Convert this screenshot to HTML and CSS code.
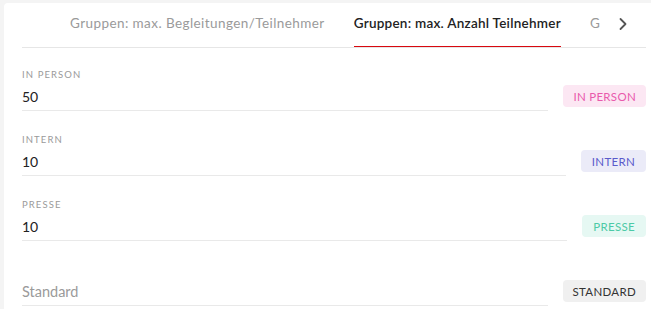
FILE: index.html
```html
<!DOCTYPE html>
<html lang="de">
<head>
<meta charset="utf-8">
<title>Gruppen</title>
<link rel="stylesheet" href="styles.css">
</head>
<body>
<div class="frame">
  <div class="card">
    <div class="tabs">
      <div class="tab-spacer"></div>
      <div class="tab-list">
        <div class="tab">Gruppen: max. Begleitungen/Teilnehmer</div>
        <div class="tab active">Gruppen: max. Anzahl Teilnehmer</div>
        <div class="tab">G</div>
      </div>
      <div class="tab-arrow">
        <svg width="10" height="14" viewBox="0 0 10 14"><path d="M2.5 2 L7.5 7 L2.5 12" fill="none" stroke="#555" stroke-width="1.8" stroke-linecap="round" stroke-linejoin="round"/></svg>
      </div>
    </div>
    <div class="rows">
      <div class="row">
        <div class="field">
          <div class="label">IN PERSON</div>
          <div class="value">50</div>
        </div>
        <span class="badge pink">IN PERSON</span>
      </div>
      <div class="row">
        <div class="field">
          <div class="label">INTERN</div>
          <div class="value">10</div>
        </div>
        <span class="badge purple">INTERN</span>
      </div>
      <div class="row">
        <div class="field">
          <div class="label">PRESSE</div>
          <div class="value">10</div>
        </div>
        <span class="badge green">PRESSE</span>
      </div>
      <div class="row">
        <div class="field">
          <div class="value placeholder">Standard</div>
        </div>
        <span class="badge gray">STANDARD</span>
      </div>
    </div>
  </div>
</div>
</body>
</html>
```
FILE: styles.css
```css
* { box-sizing: border-box; }
html, body { margin: 0; padding: 0; background: #fff; }
body { font-family: Lato, "Open Sans", sans-serif; color: #222; }
.frame {
  background: #f4f4f4;
  padding: 3px 0 0 4px;
  height: 309px;
}
.card {
  background: #fff;
  height: 306px;
  padding: 0 5px 0 18px;
  border-top-left-radius: 4px;
}
.tabs {
  display: flex;
  align-items: stretch;
  height: 45px;
  border-bottom: 1px solid #e6e6e6;
}
.tab-spacer { width: 48px; flex: none; }
.tab-list {
  display: flex;
  flex: 1;
  overflow: hidden;
  gap: 29px;
}
.tab {
  flex: none;
  font-size: 13.5px;
  letter-spacing: 0.42px;
  color: #9a9a9a;
  display: flex;
  align-items: center;
  padding-bottom: 4px;
  border-bottom: 2px solid transparent;
  margin-bottom: -1px;
  white-space: nowrap;
}
.tab.active {
  color: #222;
  font-weight: 600;
  letter-spacing: 0.25px;
  border-bottom-color: #d8090f;
}
.tab-arrow {
  width: 46px;
  flex: none;
  display: flex;
  align-items: center;
  justify-content: center;
  padding-bottom: 2px;
  background: #fff;
}
.rows {
  padding-top: 20px;
  display: flex;
  flex-direction: column;
  gap: 22px;
}
.row {
  display: flex;
  align-items: flex-end;
  gap: 15px;
}
.field {
  flex: 1;
  height: 43px;
  border-bottom: 1px solid #e9e9e9;
  display: flex;
  flex-direction: column;
  justify-content: flex-end;
  padding-bottom: 5px;
}
.label {
  font-size: 9.5px;
  letter-spacing: 1.1px;
  color: #9a9a9a;
  margin-bottom: 8px;
}
.value { font-size: 14px; color: #222; line-height: 17px; }
.value.placeholder { color: #9a9a9a; font-size: 14.5px; }
.badge {
  flex: none;
  height: 22px;
  padding: 0 10px;
  border-radius: 4px;
  font-size: 11.5px;
  letter-spacing: 0.3px;
  display: flex;
  align-items: center;
  margin-bottom: 4px;
}
.pink { background: #fce7f3; color: #e95aac; }
.purple { background: #ebebf8; color: #5a5acb; padding: 0 11px; }
.green { background: #e6f8f3; color: #4ccaa6; padding: 0 11px; }
.gray { background: #f0f0f0; color: #333; }
```
